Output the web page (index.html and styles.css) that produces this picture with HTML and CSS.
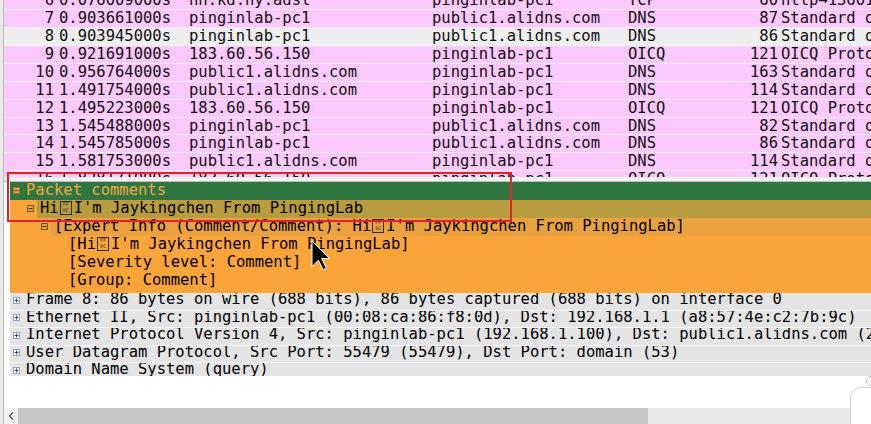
FILE: index.html
```html
<!DOCTYPE html>
<html lang="en">
<head>
<meta charset="utf-8">
<title>Wireshark packet comments</title>
<link rel="stylesheet" href="styles.css">
</head>
<body>
<div class="app">
  <div class="main">
    <div class="plist">
      <div class="rows">
        <div class="prow"><span class="c-no">6</span><span class="c-time">0.076009000s</span><span class="c-src">hn.kd.ny.adsl</span><span class="c-dst">pinginlab-pc1</span><span class="c-proto">TCP</span><span class="c-len">60</span><span class="c-info">http→13601 [ACK] Seq=1 Ack=1</span></div>
        <div class="prow"><span class="c-no">7</span><span class="c-time">0.903661000s</span><span class="c-src">pinginlab-pc1</span><span class="c-dst">public1.alidns.com</span><span class="c-proto">DNS</span><span class="c-len">87</span><span class="c-info">Standard query 0x2f1a</span></div>
        <div class="prow alt"><span class="c-no">8</span><span class="c-time">0.903945000s</span><span class="c-src">pinginlab-pc1</span><span class="c-dst">public1.alidns.com</span><span class="c-proto">DNS</span><span class="c-len">86</span><span class="c-info">Standard query 0x7c3e</span></div>
        <div class="prow"><span class="c-no">9</span><span class="c-time">0.921691000s</span><span class="c-src">183.60.56.150</span><span class="c-dst">pinginlab-pc1</span><span class="c-proto">OICQ</span><span class="c-len">121</span><span class="c-info">OICQ Protocol</span></div>
        <div class="prow"><span class="c-no">10</span><span class="c-time">0.956764000s</span><span class="c-src">public1.alidns.com</span><span class="c-dst">pinginlab-pc1</span><span class="c-proto">DNS</span><span class="c-len">163</span><span class="c-info">Standard query response</span></div>
        <div class="prow"><span class="c-no">11</span><span class="c-time">1.491754000s</span><span class="c-src">public1.alidns.com</span><span class="c-dst">pinginlab-pc1</span><span class="c-proto">DNS</span><span class="c-len">114</span><span class="c-info">Standard query response</span></div>
        <div class="prow"><span class="c-no">12</span><span class="c-time">1.495223000s</span><span class="c-src">183.60.56.150</span><span class="c-dst">pinginlab-pc1</span><span class="c-proto">OICQ</span><span class="c-len">121</span><span class="c-info">OICQ Protocol</span></div>
        <div class="prow"><span class="c-no">13</span><span class="c-time">1.545488000s</span><span class="c-src">pinginlab-pc1</span><span class="c-dst">public1.alidns.com</span><span class="c-proto">DNS</span><span class="c-len">82</span><span class="c-info">Standard query 0x5b21</span></div>
        <div class="prow"><span class="c-no">14</span><span class="c-time">1.545785000s</span><span class="c-src">pinginlab-pc1</span><span class="c-dst">public1.alidns.com</span><span class="c-proto">DNS</span><span class="c-len">86</span><span class="c-info">Standard query 0x6d04</span></div>
        <div class="prow"><span class="c-no">15</span><span class="c-time">1.581753000s</span><span class="c-src">public1.alidns.com</span><span class="c-dst">pinginlab-pc1</span><span class="c-proto">DNS</span><span class="c-len">114</span><span class="c-info">Standard query response</span></div>
        <div class="prow"><span class="c-no">16</span><span class="c-time">1.828171000s</span><span class="c-src">183.60.56.150</span><span class="c-dst">pinginlab-pc1</span><span class="c-proto">OICQ</span><span class="c-len">121</span><span class="c-info">OICQ Protocol</span></div>
      </div>
    </div>
    <div class="splitter"></div>
    <div class="detail">
      <div class="cblock">
        <div class="drow green">
          <svg class="tog" viewBox="0 0 7 7"><rect x="0.5" y="0.5" width="6" height="6" fill="#eba43d" stroke="#9c7a28"/><path d="M1.5 3.5h4" stroke="#5a4210"/></svg>
          <span class="lbl">Packet comments</span>
        </div>
        <div class="drow l1">
          <svg class="tog" viewBox="0 0 7 7"><rect x="0.5" y="0.5" width="6" height="6" fill="#eba43d" stroke="#6f5a1c"/><path d="M1.5 3.5h4" stroke="#3c2e0c"/></svg>
          <span class="lbl sel">Hi<span class="hx">FF<br>0C</span>I'm Jaykingchen From PingingLab</span>
        </div>
        <div class="drow l2">
          <svg class="tog" viewBox="0 0 7 7"><rect x="0.5" y="0.5" width="6" height="6" fill="#eba43d" stroke="#6f5a1c"/><path d="M1.5 3.5h4" stroke="#3c2e0c"/></svg>
          <span class="lbl band">[Expert Info (Comment/Comment): Hi<span class="hx">FF<br>0C</span>I'm Jaykingchen From PingingLab]</span>
        </div>
        <div class="drow l3"><span class="lbl">[Hi<span class="hx">FF<br>0C</span>I'm Jaykingchen From PingingLab]</span></div>
        <div class="drow l3"><span class="lbl">[Severity level: Comment]</span></div>
        <div class="drow l3"><span class="lbl">[Group: Comment]</span></div>
      </div>
      <div class="grow">
        <svg class="tog" viewBox="0 0 7 7"><rect x="0.5" y="0.5" width="6" height="6" fill="#f5f7fa" stroke="#98a6ba"/><path d="M1.5 3.5h4M3.5 1.5v4" stroke="#3d4f70"/></svg>
        <span class="lbl">Frame 8: 86 bytes on wire (688 bits), 86 bytes captured (688 bits) on interface 0</span>
      </div>
      <div class="grow">
        <svg class="tog" viewBox="0 0 7 7"><rect x="0.5" y="0.5" width="6" height="6" fill="#f5f7fa" stroke="#98a6ba"/><path d="M1.5 3.5h4M3.5 1.5v4" stroke="#3d4f70"/></svg>
        <span class="lbl">Ethernet II, Src: pinginlab-pc1 (00:08:ca:86:f8:0d), Dst: 192.168.1.1 (a8:57:4e:c2:7b:9c)</span>
      </div>
      <div class="grow">
        <svg class="tog" viewBox="0 0 7 7"><rect x="0.5" y="0.5" width="6" height="6" fill="#f5f7fa" stroke="#98a6ba"/><path d="M1.5 3.5h4M3.5 1.5v4" stroke="#3d4f70"/></svg>
        <span class="lbl">Internet Protocol Version 4, Src: pinginlab-pc1 (192.168.1.100), Dst: public1.alidns.com (223.5.5.5)</span>
      </div>
      <div class="grow">
        <svg class="tog" viewBox="0 0 7 7"><rect x="0.5" y="0.5" width="6" height="6" fill="#f5f7fa" stroke="#98a6ba"/><path d="M1.5 3.5h4M3.5 1.5v4" stroke="#3d4f70"/></svg>
        <span class="lbl">User Datagram Protocol, Src Port: 55479 (55479), Dst Port: domain (53)</span>
      </div>
      <div class="grow">
        <svg class="tog" viewBox="0 0 7 7"><rect x="0.5" y="0.5" width="6" height="6" fill="#f5f7fa" stroke="#98a6ba"/><path d="M1.5 3.5h4M3.5 1.5v4" stroke="#3d4f70"/></svg>
        <span class="lbl">Domain Name System (query)</span>
      </div>
    </div>
    <div class="blank"></div>
    <div class="hscroll">
      <div class="sb-btn"><svg width="14" height="16" viewBox="0 0 14 16"><polyline points="9,4.5 5.5,8 9,11.5" fill="none" stroke="#505050" stroke-width="1.3"/></svg></div>
      <div class="sb-thumb"></div>
      <div class="sb-track"></div>
    </div>
  </div>
  <div class="annot"></div>
  <svg class="cursor" width="20" height="31" viewBox="0 0 20 31"><polygon points="1,1 1,26.6 7.4,20.2 12.2,29.8 15.4,28.2 10.6,18.6 18.6,18.6" fill="#000" stroke="#fff" stroke-width="1"/></svg>
  <div class="dot"></div>
  <div class="card"></div>
</div>
</body>
</html>
```
FILE: styles.css
```css
* { box-sizing: border-box; }
html, body { margin: 0; padding: 0; }
body {
  width: 871px;
  height: 424px;
  overflow: hidden;
  background: #fff;
  font-family: "DejaVu Sans Mono", "Liberation Mono", monospace;
  font-size: 15.5px;
  color: #111;
}
.app {
  position: relative;
  width: 871px;
  height: 424px;
  overflow: hidden;
  background: #e9e9e9;
  padding-left: 3px;
}
.main {
  height: 424px;
  border-left: 1px solid #bababa;
  background: #fff;
  display: flex;
  flex-direction: column;
}

/* packet list */
.plist { height: 177px; flex: none; overflow: hidden; }
.rows { margin-top: -7.7px; }
.prow {
  display: grid;
  grid-template-columns: 50px 135px 243px 196px 101px 49px 1fr;
  height: 17.9px;
  line-height: 16.6px;
  background: #fcc9fc;
  border-bottom: 1px solid #fde9fd;
  white-space: pre;
  overflow: hidden;
}
.prow.alt { background: #eeeeee; border-bottom-color: #f8f8f8; }
.prow span { overflow: hidden; }
.c-no, .c-len { text-align: right; }
.c-time { padding-left: 5px; }
.c-info { padding-left: 3px; }

.splitter {
  height: 4.5px;
  flex: none;
  background: #f2f2f2;
  border-bottom: 1px solid #bdbdbd;
}

/* details */
.detail {
  height: 194.5px;
  flex: none;
  overflow: hidden;
  padding-left: 6px;
  background: #fff;
  color: #000;
}
.cblock { background: #fba43a; padding-bottom: 3.4px; }
.drow {
  display: flex;
  align-items: center;
  height: 18.1px;
  line-height: 17.4px;
  white-space: pre;
  padding-left: 3px;
}
.drow.l1 { padding-left: 17px; }
.drow.l2 { padding-left: 31px; }
.drow.l3 { padding-left: 52px; }
.tog { width: 7px; height: 7px; flex: none; display: block; }
.lbl {
  flex: 1;
  align-self: stretch;
  margin-left: 3px;
  padding-left: 3px;
  white-space: pre;
  overflow: hidden;
}
.green { background: #2f7641; color: #f2a640; }
.sel { background: #b79d3d; }
.band { background: #e9a23f; }

.hx {
  display: inline-block;
  width: 12px;
  height: 14px;
  margin: 0 2px 0 1px;
  border: 1px solid #2a2a2a;
  overflow: hidden;
  vertical-align: -2px;
  font-size: 5px;
  line-height: 5.5px;
  padding-top: 0.5px;
  text-align: center;
  color: #333;
}

.grow {
  display: flex;
  align-items: flex-start;
  height: 17.5px;
  line-height: 13.2px;
  padding-left: 3px;
  background: #e4e4e4;
  border-bottom: 1.6px solid #f6f6f6;
  white-space: pre;
}
.grow .tog { margin-top: 3.5px; }

.blank { flex: 1; background: #fff; }

.hscroll { height: 16px; flex: none; display: flex; }
.sb-btn { width: 14px; background: #f0f0f0; }
.sb-btn svg { display: block; }
.sb-thumb { width: 630px; background: #c6c6c6; }
.sb-track { flex: 1; background: #e7e7e7; }

/* overlays */
.annot {
  position: absolute;
  left: 7px;
  top: 172px;
  width: 505px;
  height: 50px;
  border: 2px solid #e4222b;
}
.cursor { position: absolute; left: 311px; top: 240px; }
.card {
  position: absolute;
  left: 850px;
  top: 387px;
  width: 44px;
  height: 60px;
  background: #fff;
  border: 1px solid #d4d4d4;
  border-radius: 11px;
}
.dot {
  position: absolute;
  left: 866px;
  top: 376px;
  width: 10px;
  height: 10px;
  border-radius: 50%;
  background: #fff;
  border: 1px solid #c4c4c4;
}
```
